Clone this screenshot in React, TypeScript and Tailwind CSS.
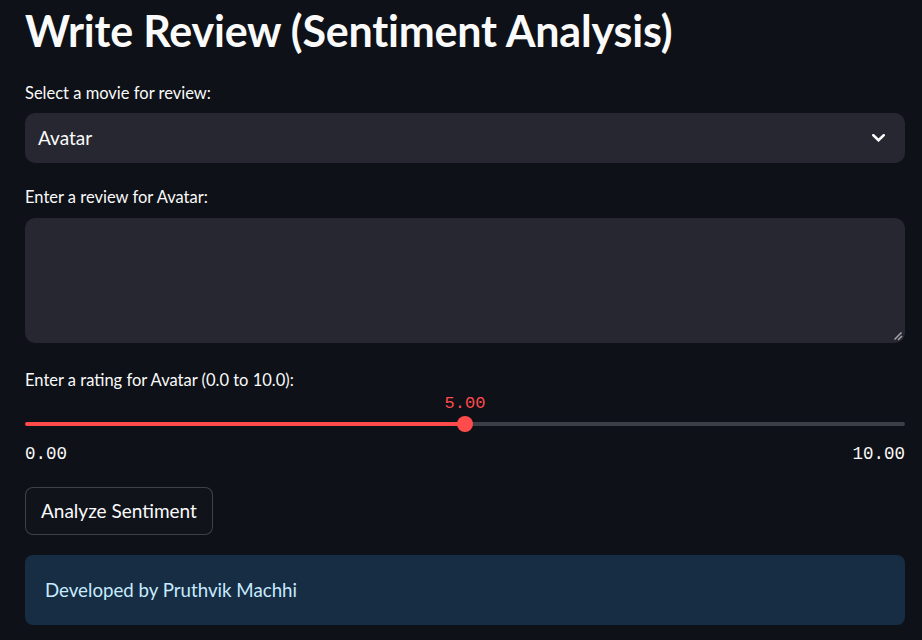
import React from "react";

function Label({ children, className = "" }: { children: React.ReactNode; className?: string }) {
  return <div className={`text-[16.5px] leading-[22px] text-[#fafafa] ${className}`}>{children}</div>;
}

export default function App() {
  return (
    <div className="min-h-screen w-full bg-[#0e1117] text-[#fafafa] font-['Lato','Noto_Sans',sans-serif]">
      <div className="flex flex-col pl-[25px] pr-[17px] pt-[3px]">
        <h1 className="text-[43px] font-bold leading-[56px] tracking-[-0.2px]">
          Write Review (Sentiment Analysis)
        </h1>

        <Label className="mt-[23px]">Select a movie for review:</Label>
        <div className="mt-[9px] h-[50px] rounded-[10px] bg-[#262730] flex items-center justify-between pl-[13px] pr-[20px]">
          <span className="text-[19px]">Avatar</span>
          <svg width="13" height="8" viewBox="0 0 13 8" fill="none">
            <path d="M1.3 1.3 L6.5 6.3 L11.7 1.3" stroke="#fafafa" strokeWidth="2.6" strokeLinecap="square" />
          </svg>
        </div>

        <Label className="mt-[23px]">Enter a review for Avatar:</Label>
        <div className="mt-[10px] h-[125px] rounded-[10px] bg-[#262730] flex items-end justify-end p-[2px]">
          <svg width="10" height="10" viewBox="0 0 10 10">
            <path d="M1.5 8.5 L8.5 1.5 M5 9 L9 5" stroke="#a0a0a0" strokeWidth="1.6" />
          </svg>
        </div>

        <Label className="mt-[26px]">Enter a rating for Avatar (0.0 to 10.0):</Label>
        <div className="mt-[1px] flex justify-center font-['Liberation_Mono',monospace] text-[17px] leading-[24px] text-[#ff4b4b]">
          5.00
        </div>
        <div className="relative flex h-[16px] items-center">
          <div className="h-[4px] flex-1 rounded-l-full bg-[#ff4b4b]" />
          <div className="h-[4px] flex-1 rounded-r-full bg-[#3b3e46]" />
          <div className="absolute left-1/2 top-0 -ml-[8px] h-[16px] w-[16px] rounded-full bg-[#ff4b4b]" />
        </div>
        <div className="mt-[10px] flex justify-between font-['Liberation_Mono',monospace] text-[17.5px] leading-[24px]">
          <span>0.00</span>
          <span>10.00</span>
        </div>

        <div className="mt-[21px] flex">
          <button className="h-[48px] px-[15px] rounded-[8px] border border-[rgba(250,250,250,0.2)] bg-[#10131a] text-[19px] text-[#fafafa]">
            Analyze Sentiment
          </button>
        </div>

        <div className="mt-[20px] h-[70px] rounded-[8px] bg-[#172d43] flex items-center px-[20px] text-[18.7px] text-[#c7ebff]">
          Developed by Pruthvik Machhi
        </div>
      </div>
    </div>
  );
}
